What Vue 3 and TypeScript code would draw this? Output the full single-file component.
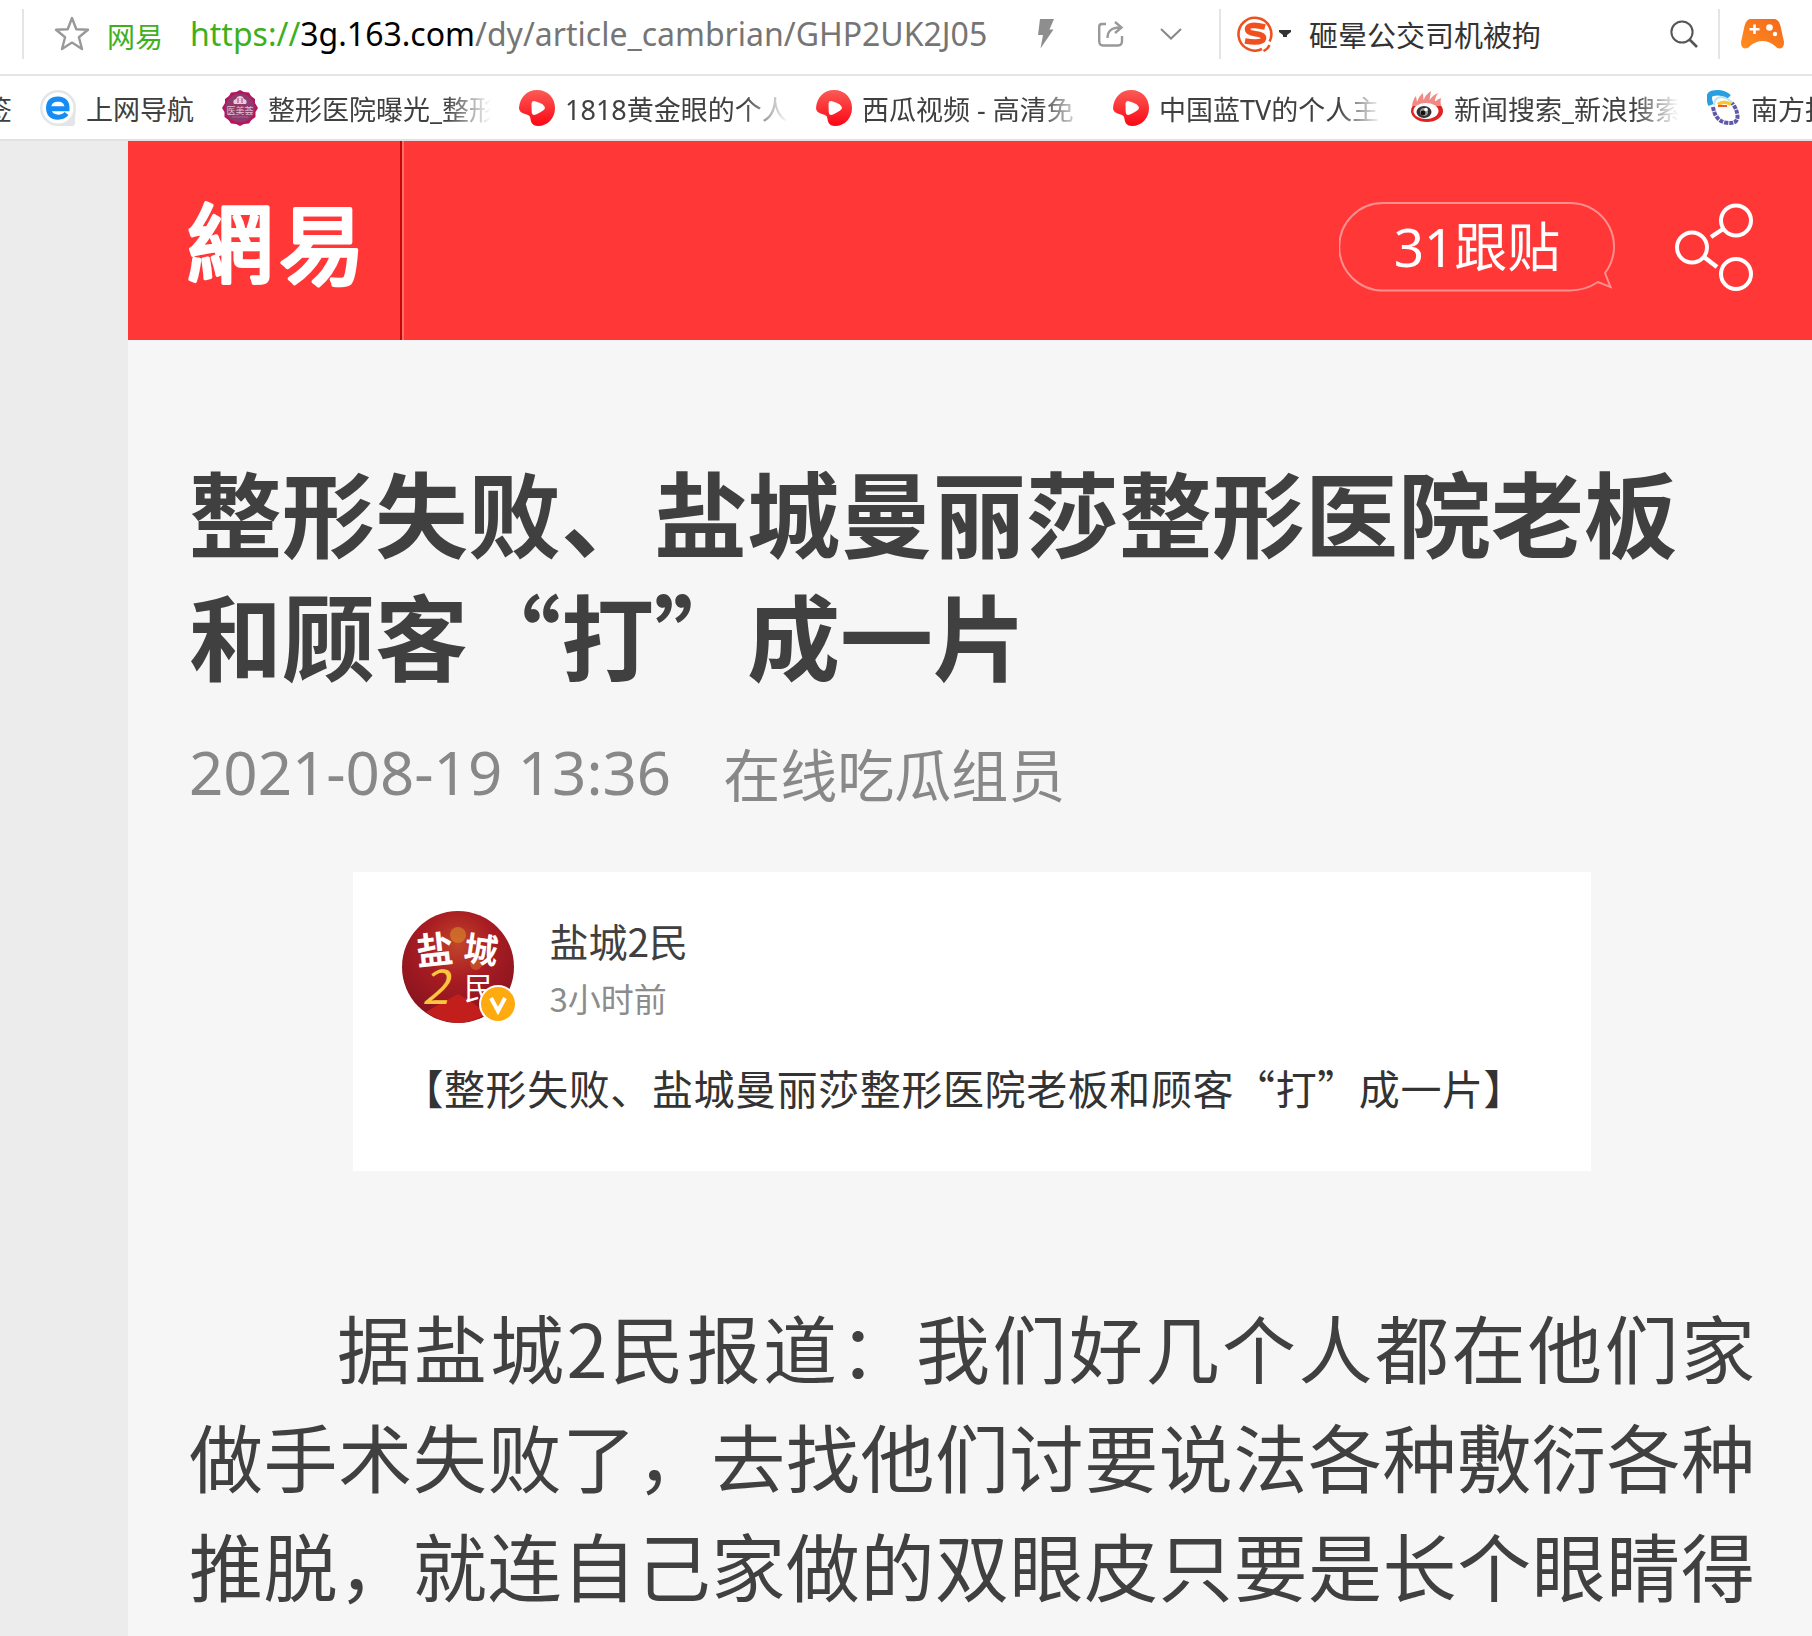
<script setup lang="ts">
import { ref } from 'vue'

type IconName = 'none' | 'e' | 'seal' | 'melon' | 'weibo' | 'south'

interface Bookmark {
  icon: IconName
  label: string
  long?: boolean
}

const query = ref<string>('砸晕公交司机被拘')

const bookmarks: Bookmark[] = [
  { icon: 'none', label: '签' },
  { icon: 'e', label: '上网导航' },
  { icon: 'seal', label: '整形医院曝光_整形', long: true },
  { icon: 'melon', label: '1818黄金眼的个人', long: true },
  { icon: 'melon', label: '西瓜视频 - 高清免', long: true },
  { icon: 'melon', label: '中国蓝TV的个人主', long: true },
  { icon: 'weibo', label: '新闻搜索_新浪搜索', long: true },
  { icon: 'south', label: '南方报', long: true },
]
</script>

<template>
  <div class="window">
    <header class="address-bar">
      <span class="rule"></span>
      <button class="icon-btn star" aria-label="收藏">
        <svg width="36" height="36" viewBox="0 0 36 36">
          <path d="M18 2 L22.3 13.2 L34 13.8 L24.9 21.2 L28 33 L18 26.6 L8 33 L11.1 21.2 L2 13.8 L13.7 13.2 Z" fill="none" stroke="#999" stroke-width="2.4" stroke-linejoin="round" />
        </svg>
      </button>
      <span class="site">网易</span>
      <div class="url"><span class="scheme">https://</span><span class="host">3g.163.com</span>/dy/article_cambrian/GHP2UK2J05</div>
      <button class="icon-btn bolt" aria-label="极速模式">
        <svg width="16" height="30" viewBox="0 0 16 30">
          <path d="M2 0 H16 L11.5 10.5 H15.5 L2.5 29.5 L5 16 H0 Z" fill="#8e8e8e" />
        </svg>
      </button>
      <button class="icon-btn send" aria-label="分享">
        <svg width="26" height="26" viewBox="0 0 26 26" fill="none" stroke="#999" stroke-width="2.4">
          <path d="M8 3 H4 Q1.2 3 1.200 6 V20 Q1.200 24.500 5 24.500 H20 Q24 24.500 24 20 V15" />
          <path d="M9.500 17 Q9.500 6.500 22 6.500 M17 1 L23.500 6.500 L17 12" />
        </svg>
      </button>
      <button class="icon-btn chevron" aria-label="展开">
        <svg width="22" height="12" viewBox="0 0 22 12">
          <path d="M1 1 L11 10.5 L21 1" fill="none" stroke="#888" stroke-width="2" />
        </svg>
      </button>
      <span class="rule"></span>
      <form class="search" @submit.prevent>
        <button type="button" class="icon-btn engine" aria-label="搜索引擎">
          <svg width="36" height="36" viewBox="0 0 36 36" fill="none">
            <path d="M25 33 A16.4 16.4 0 1 1 32.6 25.5" stroke="#f0501f" stroke-width="2.6" />
            <path d="M26.5 35 Q31 33 32.5 29" stroke="#f0501f" stroke-width="2.4" />
            <path d="M28 11 Q11 7 10.500 13 Q10.500 16.800 18.500 17.700 Q27 18.800 26.500 22.500 Q25.500 28 8 25" stroke="#f0501f" stroke-width="5.6" />
          </svg>
          <svg width="12" height="8" viewBox="0 0 12 8"><path d="M0 0 H12 V2 L8 5 V7 H4 V5 L0 2 Z" fill="#333" /></svg>
        </button>
        <input v-model="query" type="text" aria-label="搜索" />
        <button class="icon-btn" aria-label="搜索">
          <svg width="28" height="28" viewBox="0 0 28 28" fill="none" stroke="#555">
            <circle cx="12" cy="12" r="10.6" stroke-width="2" />
            <path d="M19.5 19.5 L27 27" stroke-width="2.6" />
          </svg>
        </button>
      </form>
      <span class="rule"></span>
      <button class="icon-btn game" aria-label="游戏">
        <svg width="43" height="30" viewBox="0 0 43 30">
          <defs>
            <linearGradient id="pad" x1="0" y1="1" x2="1" y2="0">
              <stop offset="0" stop-color="#ff8f1f" />
              <stop offset="1" stop-color="#f4661b" />
            </linearGradient>
          </defs>
          <path d="M9 0 H34 Q38 1 39.5 7 L43 23 Q43 29 39 29.5 Q36 29.5 34 27 Q28 22 21.5 22 Q15 22 9 27 Q7 29.5 4 29.5 Q0 29 0 23 L3.500 7 Q5 1 9 0 Z" fill="url(#pad)" />
          <path d="M13.500 5.500 V15 M8.500 10.200 H18.500" stroke="#fff" stroke-width="2.600" />
          <circle cx="28.500" cy="8.500" r="3.300" fill="#fff" />
          <circle cx="34" cy="15" r="2.200" fill="#fff" />
        </svg>
      </button>
    </header>

    <nav class="bookmarks">
      <a v-for="(b, i) in bookmarks" :key="i" href="#" class="bookmark" :class="{ cut: b.icon === 'none', long: b.long }">
        <svg v-if="b.icon === 'e'" width="36" height="36" viewBox="0 0 36 36">
          <path d="M18 0 A18 18 0 0 0 0 18 A18 18 0 0 0 18 36 H32 Q36 36 35 30 L36 18 A18 18 0 0 0 18 0Z" fill="#e3e5e8" />
          <circle cx="18" cy="18" r="15.500" fill="#fff" />
          <path d="M8.500 18.800 H27 Q27.500 9.500 18 9 Q8.800 9.200 8.500 18 Q9 27 18 27.200 Q23.500 27.200 26.500 23.500" fill="none" stroke="#158bf5" stroke-width="5" />
        </svg>
        <svg v-else-if="b.icon === 'seal'" width="36" height="36" viewBox="0 0 36 36">
          <path d="M18 0 L22 2 L27 2.500 L29 6 L33 9 L33 13 L36 18 L33.500 22 L33.500 27 L29.500 30 L27 33.500 L22 34 L18 36 L14 34 L9 33.500 L6.500 30 L2.500 27 L2.500 22 L0 18 L3 13 L3 9 L7 6 L9 2.500 L14 2 Z" fill="#b5155f" />
          <circle cx="18" cy="18" r="14.500" fill="#8f3a6d" />
          <path d="M12 14 Q10 10 14 9 Q15 6 18 6 Q21 6 22 9 Q26 10 24 14 Z" fill="#ecc9dc" />
          <path d="M16 13 V8 M20 13 V8" stroke="#a34a7f" />
          <text x="18" y="24" text-anchor="middle" font-size="9" fill="#e3bfd2">医美荟</text>
          <path d="M10 27 H26" stroke="#a8628c" />
        </svg>
        <svg v-else-if="b.icon === 'melon'" width="36" height="36" viewBox="0 0 36 36">
          <defs>
            <linearGradient :id="'melon' + i" x1="0" y1="0" x2="0" y2="1">
              <stop offset="0" stop-color="#fb5b55" />
              <stop offset="1" stop-color="#fb0615" />
            </linearGradient>
          </defs>
          <path d="M18 0 C29 0 36 8 36 18 C36 28 29 36 19 36 C14 36 12 33 11.500 29 C11.200 26 10 25 6 24 C2 23 0 21 0 18 C1 7 8 0 18 0 Z" :fill="'url(#melon' + i + ')'" />
          <path d="M12.500 13.500 Q13 10.500 16 11.200 Q26 14 26 18 Q26 20 17 24.500 Q13 26 12.700 22 Z" fill="#fff" />
        </svg>
        <svg v-else-if="b.icon === 'weibo'" width="34" height="34" viewBox="0 0 34 34">
          <ellipse cx="17" cy="20" rx="16" ry="11" fill="#e02222" />
          <path d="M2 15 Q3 8 6 5 L7 11 Q9 5 13 2 L13.500 9 Q16 3 21 0 L19.500 9 Q23 4 28 2 Q25 6 24.500 11 Q28 8 31 7 Q30 11 31 15 Z" fill="#f08a84" />
          <ellipse cx="16" cy="20" rx="12.500" ry="8" fill="#fff" />
          <ellipse cx="14" cy="21" rx="7.500" ry="6" fill="#333" />
          <circle cx="14" cy="21" r="4" fill="#999" />
          <circle cx="13" cy="22" r="2.400" fill="#111" />
          <circle cx="16" cy="18.500" r="1.800" fill="#fff" />
        </svg>
        <svg v-else-if="b.icon === 'south'" width="34" height="36" viewBox="0 0 34 36" fill="none">
          <path d="M4 15 Q0 5 5 3.500 Q15 1 22 7" stroke="#2a9fdf" stroke-width="5.5" />
          <path d="M7 15 Q7 8 14 7 Q22 8 26 14" stroke="#bfe3f4" stroke-width="2" />
          <path d="M6 17 Q8 30 18 32.500 Q31 35 30.500 26 Q30 19 25 13" stroke="#5f5aa8" stroke-width="4" stroke-dasharray="4 1" />
          <path d="M11 14.500 Q17 10 24 14.500" stroke="#f7c733" stroke-width="3.500" />
          <path d="M11 16 H20" stroke="#ee5a2a" stroke-width="2" />
        </svg>
        <span class="label">{{ b.label }}</span>
      </a>
    </nav>

    <div class="stage">
      <main class="page">
        <header class="masthead">
          <a href="#" class="logo" aria-label="網易">
            <svg width="176" height="92" viewBox="0 0 176 92" class="logo-mark">
              <text x="-1" y="76" font-size="86">網</text>
              <text x="91" y="78" font-size="86">易</text>
            </svg>
          </a>
          <div class="tools">
            <button class="replies">
              <svg class="bubble" width="276" height="90" viewBox="0 0 276 90">
                <path d="M44 1 H231 A43.500 43.500 0 0 1 266 71 L271.500 85 L259 80 Q246 88.500 231 88.500 H44 A43 43 0 0 1 44 1 Z" fill="none" stroke="#ff8f8f" stroke-width="2" />
              </svg>
              <span>31跟贴</span>
            </button>
            <button class="icon-btn" aria-label="分享">
              <svg width="78" height="88" viewBox="0 0 78 88" fill="none" stroke="#fff" stroke-width="4">
                <circle cx="17" cy="44.500" r="15" />
                <circle cx="61" cy="17.500" r="15" />
                <circle cx="61" cy="71" r="15" />
                <path d="M48 26 L36 34 M29 54 L42 64" stroke-width="4.500" />
              </svg>
            </button>
          </div>
        </header>

        <article class="article">
          <h1>整形失败、盐城曼丽莎整形医院老板和顾客“打”成一片</h1>
          <p class="meta">
            <time datetime="2021-08-19T13:36">2021-08-19 13:36</time>
            <span>在线吃瓜组员</span>
          </p>

          <section class="card">
            <div class="poster">
              <svg width="116" height="114" viewBox="0 0 116 114">
                <defs>
                  <radialGradient id="avatar" cx="0.500" cy="0.300" r="0.700">
                    <stop offset="0" stop-color="#c2452a" />
                    <stop offset="0.450" stop-color="#a81c22" />
                    <stop offset="1" stop-color="#86131f" />
                  </radialGradient>
                </defs>
                <circle cx="56" cy="57" r="56" fill="url(#avatar)" />
                <path d="M24 102 Q40 92 56 84 Q72 92 84 104 Q70 113 56 113 Q38 112 24 102Z" fill="#c21f1c" />
                <circle cx="56" cy="25" r="8" fill="#d98a2c" opacity="0.600" />
                <circle cx="74" cy="54" r="6" fill="#d9702c" opacity="0.500" />
                <g font-weight="700" fill="#fff">
                  <text x="14" y="54" font-size="37" transform="rotate(-6 30 40)">盐</text>
                  <text x="62" y="52" font-size="34" transform="rotate(8 78 40)">城</text>
                  <text x="62" y="89" font-size="30" font-weight="400">民</text>
                </g>
                <text x="20" y="94" font-size="48" font-style="italic" font-weight="400" fill="#fbc540">2</text>
                <circle cx="96" cy="94" r="19" fill="#fff" />
                <circle cx="96" cy="94" r="17" fill="#ffab0f" />
                <path d="M89 88 L96 101 L103 88" fill="none" stroke="#fff" stroke-width="4" />
              </svg>
              <div class="who">
                <strong>盐城2民</strong>
                <span>3小时前</span>
              </div>
            </div>
            <p class="headline">【整形失败、盐城曼丽莎整形医院老板和顾客“打”成一片】</p>
          </section>

          <p class="body">据盐城2民报道：我们好几个人都在他们家做手术失败了，去找他们讨要说法各种敷衍各种推脱，就连自己家做的双眼皮只要是长个眼睛得</p>
        </article>
      </main>
    </div>
  </div>
</template>

<style>
body {
  margin: 0;
}
</style>

<style scoped>
.window {
  display: flex;
  flex-direction: column;
  min-height: 100vh;
  overflow: hidden;
  background: #fff;
  color: #404040;
  font-family: "Noto Sans", "Noto Sans CJK SC", sans-serif;
}
svg {
  display: block;
  flex: none;
}
button {
  padding: 0;
  border: 0;
  background: none;
  font: inherit;
  color: inherit;
  cursor: pointer;
}
a {
  color: inherit;
  text-decoration: none;
}
.icon-btn {
  display: flex;
  align-items: center;
  flex: none;
}

.address-bar {
  display: flex;
  align-items: center;
  height: 68px;
  padding: 0 28px 6px 22px;
  border-bottom: 2px solid #e5e5e5;
  white-space: nowrap;
}
.rule {
  flex: none;
  width: 2px;
  height: 50px;
  background: #e5e5e5;
}
.star {
  margin: 0 17px 0 30px;
}
.site {
  margin-right: 27px;
  padding-top: 3px;
  font-size: 28px;
  color: #3fb01c;
}
.url {
  flex: 1;
  min-width: 0;
  overflow: hidden;
  font-size: 32px;
  line-height: 48px;
  color: #757575;
}
.scheme {
  color: #3fb01c;
}
.host {
  color: #000;
}
.bolt {
  margin-right: 44px;
}
.send {
  margin-right: 36px;
}
.chevron {
  margin-right: 37px;
}
.search {
  display: flex;
  align-items: center;
  margin: 0 20px 0 16px;
}
.engine {
  gap: 6px;
}
.search input {
  width: 361px;
  height: 48px;
  margin-left: 18px;
  padding: 0;
  border: 0;
  outline: 0;
  box-sizing: border-box;
  background: none;
  font: inherit;
  font-size: 29px;
  color: #333;
}
.game {
  margin-left: 21px;
}

.bookmarks {
  display: flex;
  align-items: center;
  gap: 28px;
  height: 63px;
  border-bottom: 2px solid #e3e1e1;
  overflow: hidden;
}
.bookmark {
  display: flex;
  align-items: center;
  flex: none;
  gap: 10px;
  font-size: 27px;
  line-height: 36px;
  white-space: nowrap;
}
.long {
  width: 269px;
}
.label {
  padding-top: 4px;
}
.long .label {
  flex: 1;
  overflow: hidden;
  -webkit-mask-image: linear-gradient(to right, #000 80%, transparent);
  mask-image: linear-gradient(to right, #000 80%, transparent);
}
.cut {
  justify-content: flex-end;
  width: 12px;
}
.cut .label {
  flex: none;
}

.stage {
  display: flex;
  flex: 1;
  padding-left: 128px;
  background: #ececec;
}
.page {
  flex: 1;
  min-width: 0;
  background: #f6f6f6;
}
.masthead {
  display: flex;
  justify-content: space-between;
  height: 199px;
  background: #ff3737;
  color: #fff;
}
.logo {
  display: flex;
  align-items: center;
  width: 212px;
  padding: 10px 0 0 60px;
  border-right: 2px solid #c40606;
  box-shadow: 2px 0 0 #ff6d6d;
}
.logo-mark {
  fill: #fff;
  stroke: #fff;
  stroke-width: 4px;
  stroke-linejoin: round;
  font-family: "Noto Sans CJK TC", sans-serif;
  font-weight: 400;
}
.tools {
  display: flex;
  align-items: center;
  gap: 60px;
  padding: 13px 59px 0 0;
}
.replies {
  position: relative;
  width: 276px;
  height: 90px;
  font-size: 53px;
  line-height: 84px;
}
.bubble {
  position: absolute;
  inset: 0;
}

.article {
  padding: 109px 57px 0 61px;
  font-family: "Noto Sans CJK SC", sans-serif;
}
h1 {
  margin: 0;
  font-size: 93px;
  line-height: 123px;
  font-weight: 700;
}
.meta {
  display: flex;
  align-items: center;
  gap: 52px;
  margin: 35px 0 58px;
  font-size: 57px;
  line-height: 84px;
  color: #888;
}
.meta time {
  font-family: "Noto Sans", sans-serif;
  font-size: 60px;
}
.card {
  box-sizing: border-box;
  width: 79%;
  margin: 0 auto;
  padding: 38px 66px 54px 49px;
  background: #fff;
}
.poster {
  display: flex;
  gap: 31px;
}
.who {
  display: flex;
  flex-direction: column;
}
.who strong {
  font-size: 39px;
  line-height: 60px;
  font-weight: 400;
}
.who span {
  font-size: 33px;
  line-height: 56px;
  color: #8c8c8c;
}
.headline {
  margin: 31px 0 0;
  font-size: 41px;
  line-height: 60px;
  color: #333;
  text-align-last: justify;
  white-space: nowrap;
}
.body {
  margin: 120px 0 0;
  font-size: 74px;
  line-height: 109px;
  text-indent: 2em;
  text-align: justify;
  text-align-last: justify;
}
</style>
